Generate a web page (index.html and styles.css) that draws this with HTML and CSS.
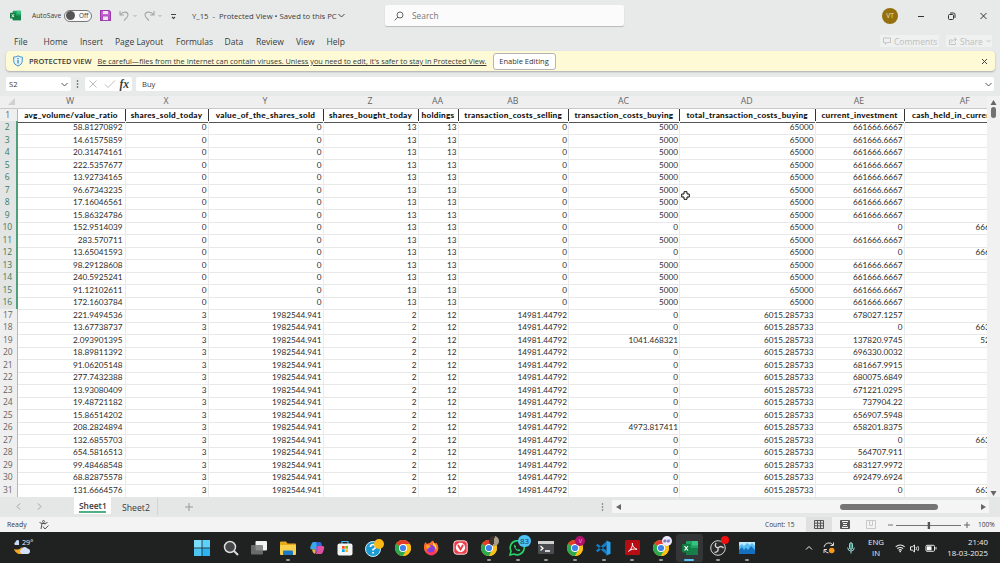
FILE: index.html
```html
<!DOCTYPE html>
<html lang="en">
<head>
    <meta charset="UTF-8">
    <meta name="viewport" content="width=device-width, initial-scale=1.0">
    <title>Y_15 - Protected View</title>
    <link rel="stylesheet" href="styles.css">
</head>
<body>

<svg class="defs" width="0" height="0">
    <symbol id="chrome" viewBox="0 0 16 16">
        <circle cx="8" cy="8" r="8" fill="#fbc116"/>
        <path d="M8 8 L1.1 4 A8 8 0 0 1 14.9 4 Z" fill="#e33b2e"/>
        <path d="M8 8 L1.1 4 A8 8 0 0 0 8 16 L11.4 10 Z" fill="#2da94f"/>
        <path d="M8 4 H14.9 A8 8 0 0 1 8 16 L11.4 10 Z" fill="#fbc116"/>
        <circle cx="8" cy="8" r="4" fill="#fff"/>
        <circle cx="8" cy="8" r="3.1" fill="#3f82ee"/>
    </symbol>
    <symbol id="excel" viewBox="0 0 16 16">
        <rect x="4" y="1" width="12" height="14" rx="1" fill="#1fa363"/>
        <path d="M10 1h5a1 1 0 0 1 1 1v3.500h-6z" fill="#35c481"/>
        <path d="M4 8h12v6a1 1 0 0 1-1 1H5a1 1 0 0 1-1-1z" fill="#17804a"/>
        <rect x="0" y="4" width="8.500" height="8.500" rx="1" fill="#107c41"/>
        <path d="M2.500 6l3.500 4.500M6 6l-3.500 4.500" stroke="#fff" stroke-width="1.200"/>
    </symbol>
</svg>

<div class="titlebar">
    <svg class="app-icon" width="11" height="11"><use href="#excel"/></svg>
    <span class="autosave">AutoSave</span>
    <span class="toggle"><i></i>Off</span>
    <svg class="save" width="11" height="11" viewBox="0 0 11 11">
        <path d="M.6.600h8.400l1.400 1.400v8.400H.6z" fill="#c868d4" stroke="#9c38ac" stroke-width="1.200"/>
        <rect x="3" y="1" width="5" height="3" fill="#f3e3f5"/>
        <rect x="2.500" y="6" width="6" height="4.400" fill="#f3e3f5" stroke="#9c38ac" stroke-width=".8"/>
    </svg>
    <svg class="undo" width="60" height="12" viewBox="0 0 60 12" fill="none" stroke="#a5a7a6" stroke-width="1.100">
        <path d="M1 1v4h4M1.300 4.800C4 1 9 1.500 9 5c0 2-2 3.500-4 5.500"/>
        <path d="M14.500 5l1.500 1.500L17.500 5" stroke-width=".9"/>
        <path d="M35 1v4h-4M34.700 4.800C32 1 26 1.500 26 5c0 2 2 3.500 4 5.500"/>
        <path d="M39.500 5l1.500 1.500L42.500 5" stroke-width=".9"/>
        <path d="M52 4.500h5M53 7l1.500 1.500L56 7" stroke="#444"/>
    </svg>
    <span class="doc-name">Y_15&nbsp; -&nbsp; Protected View • Saved to this PC</span>
    <svg class="doc-arrow" width="7" height="5" viewBox="0 0 7 5" fill="none" stroke="#444"><path d="M.5 1l3 3 3-3"/></svg>
    <div class="search">
        <svg width="10" height="10" viewBox="0 0 10 10" fill="none" stroke="#666"><circle cx="6" cy="4" r="3"/><path d="M4 6L.7 9.300"/></svg>
        Search
    </div>
    <span class="avatar">VT</span>
    <svg class="window-buttons" width="70" height="10" viewBox="0 0 70 10" fill="none" stroke="#333">
        <path d="M1 5.500h6"/>
        <rect x="31.500" y="3.500" width="5" height="5" rx="1"/>
        <path d="M33 2h3.500q1.500 0 1.500 1.500V7"/>
        <path d="M63.500 2l6 6M69.500 2l-6 6"/>
    </svg>
</div>

<div class="menu">
    <span>File</span><span>Home</span><span>Insert</span><span>Page Layout</span><span>Formulas</span><span>Data</span><span>Review</span><span>View</span><span>Help</span>
    <div class="menu-button comments">
        <svg width="8" height="8" viewBox="0 0 8 8" fill="none" stroke="#c3c3c3"><path d="M.5 1h7v4.500H4L2.500 7.300V5.500h-2z"/></svg>
        Comments
    </div>
    <div class="menu-button share">
        <svg width="8" height="8" viewBox="0 0 8 8" fill="none" stroke="#c3c3c3"><path d="M3 3H.5v4.500h6V5.500M2.500 5.500C3 3.500 4 2.500 7 2.500M5.500.5l2 2-2 2"/></svg>
        Share
        <svg width="5" height="4" viewBox="0 0 5 4" fill="none" stroke="#c3c3c3"><path d="M.5 1l2 2 2-2"/></svg>
    </div>
</div>

<div class="protected">
    <svg class="shield" width="10" height="12" viewBox="0 0 10 12">
        <path d="M5 .8C6.500 1.800 8 2 9.300 2v3.500C9.300 8.500 7.500 10 5 11 2.500 10 .7 8.500.7 5.500V2C2 2 3.500 1.800 5 .8z" fill="#e6f3fb" stroke="#3f94cc"/>
        <path d="M5 3v1.200M5 5v3.500" stroke="#2a84c4" stroke-width="1.200"/>
    </svg>
    <b>PROTECTED VIEW</b>
    <u>Be careful—files from the Internet can contain viruses. Unless you need to edit, it's safer to stay in Protected View.</u>
    <button>Enable Editing</button>
    <svg class="close" width="7" height="7" viewBox="0 0 7 7" stroke="#444"><path d="M1 1l5 5M6 1L1 6"/></svg>
</div>

<div class="formula-bar">
    <div class="name-box">S2
        <svg width="7" height="5" viewBox="0 0 7 5" fill="none" stroke="#555"><path d="M.5 1l3 3 3-3"/></svg>
    </div>
    <svg class="dots" width="3" height="8" viewBox="0 0 3 8" fill="#444"><circle cx="1.500" cy="1" r=".8"/><circle cx="1.500" cy="4" r=".8"/><circle cx="1.500" cy="7" r=".8"/></svg>
    <div class="fx">
        <svg width="27" height="8" viewBox="0 0 27 8" fill="none" stroke="#bbb"><path d="M.5.500l7 7M7.500.500l-7 7M16 4.500l3 3L26 .5"/></svg>
        <i>fx</i>
    </div>
    <div class="formula">Buy
        <svg width="7" height="5" viewBox="0 0 7 5" fill="none" stroke="#555"><path d="M.5 1l3 3 3-3"/></svg>
    </div>
</div>

<div class="sheet-area">
    <div class="sheet" id="sheet"></div>
    <div class="vscroll">
        <svg width="7" height="5" viewBox="0 0 7 5" fill="#666"><path d="M.5 5h6L3.500 0z"/></svg>
        <i></i>
        <svg class="down" width="7" height="5" viewBox="0 0 7 5" fill="#666"><path d="M.5 0h6L3.500 5z"/></svg>
    </div>
    <svg class="cursor" width="9" height="9" viewBox="0 0 9 9"><path d="M3 .7h3V3h2.300v3H6v2.300H3V6H.7V3H3z" fill="#fff" stroke="#111"/></svg>
</div>

<div class="tabs">
    <svg class="tab-nav" width="26" height="7" viewBox="0 0 26 7" fill="none" stroke="#a0a0a0"><path d="M4 .5l-3 3 3 3M22 .5l3 3-3 3"/></svg>
    <div class="tab active"><span>Sheet1</span></div>
    <div class="tab">Sheet2</div>
    <svg class="add" width="8" height="8" viewBox="0 0 8 8" stroke="#999"><path d="M4 0v8M0 4h8"/></svg>
    <svg class="tab-dots" width="3" height="8" viewBox="0 0 3 8" fill="#666"><circle cx="1.500" cy="1" r=".8"/><circle cx="1.500" cy="4" r=".8"/><circle cx="1.500" cy="7" r=".8"/></svg>
    <div class="hscroll">
        <svg width="5" height="6" viewBox="0 0 5 6" fill="#666"><path d="M5 0v6L0 3z"/></svg>
        <i></i>
        <svg width="5" height="6" viewBox="0 0 5 6" fill="#666"><path d="M0 0v6l5-3z"/></svg>
    </div>
</div>

<div class="status">
    <span class="ready">Ready</span>
    <svg class="access" width="10" height="10" viewBox="0 0 10 10" fill="none" stroke="#555"><circle cx="4.500" cy="1.500" r="1"/><path d="M.5 2.500l2.500 1L2 9M8.500 2.500L6 3.500v1M3 3.500h3M4 6.500l2 2.500 3.500-3.500"/></svg>
    <span class="count">Count: 15</span>
    <div class="view-btn on"><svg width="10" height="9" viewBox="0 0 10 9" fill="none" stroke="#555"><path d="M.5.500h9v8h-9zM3.500.500v8M6.500.500v8M.5 3.200h9M.5 5.800h9"/></svg></div>
    <div class="view-btn"><svg width="10" height="9" viewBox="0 0 10 9" fill="none" stroke="#555"><path d="M.5.500h9v8h-9zM2.500 2.500h5v4h-5zM2.500 4.500h5M8.500 1v7M1.500 1v7"/></svg></div>
    <div class="view-btn"><svg width="10" height="9" viewBox="0 0 10 9" fill="none" stroke="#c8c8c8"><path d="M.5.500h9v8h-9zM3.500.500v5h3v-5"/></svg></div>
    <svg class="zoom-slider" width="82" height="8" viewBox="0 0 82 8" stroke="#666"><path d="M0 4h5M8 4.500h65" stroke-width=".9"/><path d="M76 4h6M79 1v6"/><rect x="39.700" y="1" width="2.400" height="7" fill="#555" stroke="none"/></svg>
    <span class="percent">100%</span>
</div>

<div class="taskbar">
    <div class="weather">
        <svg width="18" height="16" viewBox="0 0 18 16">
            <path d="M2 6a2 2 0 0 1 .5-3A2.500 2.500 0 0 1 6 1.500V6z" fill="#c7d9f5"/>
            <path d="M1 10a6.500 6.500 0 0 0 10 4L9 8C6 11 4 11 1 10z" fill="#f5a623"/>
            <path d="M9 15a2.600 2.600 0 0 1-.3-5 3.300 3.300 0 0 1 5.800-.5A2.800 2.800 0 0 1 15 15z" fill="#d3e1fa"/>
        </svg>
        <span>29°</span>
    </div>
    <div class="apps">
        <div class="app"><svg width="16" height="16" viewBox="0 0 16 16" fill="#4cc5f5"><rect width="7.600" height="7.600" fill="#7bdcfb"/><rect x="8.400" width="7.600" height="7.600" fill="#5fd0fa"/><rect y="8.400" width="7.600" height="7.600"/><rect x="8.400" y="8.400" width="7.600" height="7.600" fill="#2db2f2"/></svg></div>
        <div class="app"><svg width="16" height="16" viewBox="0 0 16 16" fill="#454748" stroke="#dcdcdc" stroke-width="1.500"><circle cx="7" cy="7" r="5.500"/><path d="M11 11l4 4" stroke-width="2"/></svg></div>
        <div class="app"><svg width="16" height="16" viewBox="0 0 16 16"><rect x="4.500" y="1" width="11.500" height="9.500" rx="1" fill="#f3f3f3"/><rect y="5" width="12" height="9.500" rx="1" fill="#777" opacity=".85"/></svg></div>
        <div class="app run"><svg width="16" height="16" viewBox="0 0 16 16"><path d="M0 2.500a1 1 0 0 1 1-1h5l1.500 2H15a1 1 0 0 1 1 1V14H0z" fill="#e8a91d"/><rect y="5" width="16" height="10" rx="1" fill="#fbd04c"/><path d="M3 15v-3.500q0-1 1-1h8q1 0 1 1V15z" fill="#1d78c5"/></svg></div>
        <div class="app"><svg width="16" height="16" viewBox="0 0 16 16">
            <path d="M5 2h4L7 9.500H3C1 9.500 1 8 1.500 6.500L3 3Q3.500 2 5 2z" fill="#38a8e8"/><path d="M2 7l1 2.500h4l-1 4.500-2-1.500z" fill="#e9b83a"/><path d="M7 2h4q1 0 1.500 1.500L13 6H10L8.500 9z" fill="#3165dc"/><path d="M9 6h4.500c2 0 2 1.500 1.500 3l-1 3q-.5 2-2.500 2H7z" fill="#e0529f"/><path d="M7.500 6L9 7l-2 6-1.500 1z" fill="#9362e0"/></svg></div>
        <div class="app"><svg width="16" height="16" viewBox="0 0 16 16"><path d="M5 4V1.500h6V4" fill="none" stroke="#4bb8ee" stroke-width="1.200"/><rect x=".5" y="3.500" width="15" height="12" rx="2" fill="#f4f4f4"/><rect x="5" y="6" width="2.700" height="2.700" fill="#f25022"/><rect x="8.300" y="6" width="2.700" height="2.700" fill="#7fba00"/><rect x="5" y="9.300" width="2.700" height="2.700" fill="#00a4ef"/><rect x="8.300" y="9.300" width="2.700" height="2.700" fill="#ffb900"/></svg></div>
        <div class="app"><svg width="20" height="18" viewBox="0 0 20 18"><circle cx="9" cy="10" r="7.500" fill="#1b9bd3" stroke="#c8ecfa"/><path d="M6.500 8q0-2.500 2.500-2.500T11.500 8Q11.500 9.500 9 10.500v1M9 13v1.600" fill="none" stroke="#fff" stroke-width="1.700"/><circle cx="15" cy="5" r="5" fill="#fcb813"/></svg></div>
        <div class="app"><svg width="16" height="16"><use href="#chrome"/></svg></div>
        <div class="app"><svg width="16" height="16" viewBox="0 0 16 16"><path d="M1 6q0-2 1.500-4L4 4q1.500-1 3-1Q8 1 10 .5q0 2 2 3l1.500-.8Q15.500 5 15.500 8.500A7.400 7.400 0 0 1 1 9z" fill="#ff6a28"/><path d="M10 .5q0 2 2 3.500 2 2 1.500 5.500L10 6z" fill="#ffd23c"/><circle cx="8" cy="9" r="4" fill="#843fda"/><path d="M2 8q2 5 6 4.500T11.500 9Q15 14 9 15.500 3 15.500 2 8z" fill="#ff385d"/><path d="M3 5q3-1 5 2Q5 7 5 9.500 3 8 3 5z" fill="#ffa526"/></svg></div>
        <div class="app"><svg width="15" height="15" viewBox="0 0 15 15"><rect x=".8" y=".8" width="13.400" height="13.400" rx="3" fill="#ef3b47" stroke="#f7dadc"/><circle cx="7.500" cy="7.500" r="4.700" fill="#fff"/><path d="M5.300 5.500l2.200 4 2.200-4" fill="none" stroke="#ef3b47" stroke-width="1.800" stroke-linecap="round"/></svg></div>
        <div class="app run"><svg width="16" height="16"><use href="#chrome"/></svg><em class="photo"></em></div>
        <div class="app run"><svg width="16" height="16" viewBox="0 0 16 16"><path d="M1 15l1-4A7 7 0 1 1 5 14z" fill="#202222" stroke="#27d366" stroke-width="1.600"/><path d="M5.500 4.500q-1 1-.3 2.500Q6.500 10 9 11q1.500.5 2.500-.8L9.800 9l-1 .8Q7 9 6.500 7.500l.7-1z" fill="#27d366"/></svg><em class="count-badge">83</em></div>
        <div class="app run"><svg width="16" height="13" viewBox="0 0 16 13"><rect width="16" height="13" rx="1" fill="#4a4d50"/><rect width="16" height="3" fill="#d0d0d0"/><path d="M2.500 5l2.500 2.200L2.500 9.500M7 10h5" fill="none" stroke="#fff" stroke-width="1.300"/></svg></div>
        <div class="app run"><svg width="16" height="16"><use href="#chrome"/></svg><em class="letter">V</em></div>
        <div class="app run"><svg width="16" height="16" viewBox="0 0 16 16"><path d="M11.500.5L15.500 2.300v11.400l-4 1.800z" fill="#2aa2ee"/><path d="M12 1L1 10.500l1.500 1.700L12 5zM12 15L1 5.500l1.500-1.700L12 11z" fill="#127cc4"/></svg></div>
        <div class="app run"><svg width="15" height="15" viewBox="0 0 15 15"><rect width="15" height="15" rx="1.500" fill="#b50d12"/><path d="M7.500 3c-.8 1 .6 5 4.500 6.300-3-.8-6 0-8.500 2C5.500 10 8 6.500 7.500 3z" fill="none" stroke="#fff"/></svg></div>
        <div class="app run"><svg width="16" height="16"><use href="#chrome"/></svg><em class="hash">##</em></div>
        <div class="app run current"><svg width="16" height="16"><use href="#excel"/></svg></div>
        <div class="app run"><svg width="16" height="16" viewBox="0 0 16 16"><circle cx="8" cy="8" r="7.300" fill="#2b2b2d" stroke="#d5d5d5"/><path d="M8 8q-4-1-2-5M8 8q3-3 5.500 0M8 8q1 4-3.500 4.500" fill="none" stroke="#d5d5d5" stroke-width="1.400"/></svg><em class="rec"></em></div>
        <div class="app run"><svg width="16" height="12" viewBox="0 0 16 12"><rect width="16" height="12" fill="#55bdf2"/><path d="M0 8l3-3 2 3 2-2.500 2 2.500 3-4 4 4v4H0z" fill="#1470bd"/><path d="M0 4l3-2 2 2 3-3 3 2 2-2 3 3V0H0z" fill="#bfe8fb"/></svg></div>
    </div>
    <div class="tray">
        <svg class="chevron" width="8" height="5" viewBox="0 0 8 5" fill="none" stroke="#eee"><path d="M1 4.500l3-3 3 3"/></svg>
        <svg class="sync" width="12" height="12" viewBox="0 0 12 12" fill="none" stroke="#ddd"><path d="M1 5a5 5 0 0 1 9-2M10.500.5V3.500H7.500M1 11V7.500h3M1.500 8a5 5 0 0 0 4 3"/><circle cx="8.700" cy="8.500" r="2.800" fill="#f79a1c" stroke="none"/></svg>
        <svg class="mic" width="8" height="12" viewBox="0 0 8 12" fill="none" stroke="#9adbd3"><rect x="2.500" y=".8" width="3" height="6.500" rx="1.500" fill="#3f8f88"/><path d="M.7 5.500q0 3.500 3.300 3.500t3.300-3.500M4 9v2.500"/></svg>
        <div class="lang">ENG<br>IN</div>
        <svg class="net" width="42" height="10" viewBox="0 0 42 10" fill="none" stroke="#e8e8e8">
            <path d="M.7 4a6 6 0 0 1 9 0M2.300 5.700a4 4 0 0 1 5.800 0M3.700 7.300a2 2 0 0 1 3 0" stroke-width="1.100"/><circle cx="5.200" cy="8.600" r=".8" fill="#fff" stroke="none"/>
            <path d="M15.500 3.800h1.800L19.500 2v7l-2.200-1.900h-1.800zM21 4q1 1.500 0 3M22.800 3q1.700 2.500 0 5"/>
            <rect x="31" y="2.300" width="8.500" height="6" rx="1"/><rect x="32" y="3.300" width="4.500" height="4" fill="#fff" stroke="none"/><path d="M41 4v2.500"/>
        </svg>
        <div class="clock">21:40<br>18-03-2025</div>
    </div>
</div>

<script src="script.js"></script>
</body>
</html>
```

FILE: styles.css
```css
* {
    box-sizing: border-box;
}
body {
    margin: 0;
    width: 1000px;
    height: 563px;
    overflow: hidden;
    background: #e8eae9;
    color: #3a3a3a;
    font-family: "Open Sans", "Noto Sans", sans-serif;
    font-size: 8px;
    display: flex;
    flex-direction: column;
}
svg {
    display: block;
    flex: none;
}
.defs {
    position: absolute;
}
span, b, u {
    white-space: nowrap;
}

/* title bar */
.titlebar {
    height: 31px;
    display: flex;
    align-items: center;
    padding-left: 10px;
}
.autosave {
    margin-left: 11px;
    width: 32px;
    font-size: 6.7px;
}
.toggle {
    width: 28px;
    height: 12px;
    border: 1px solid #777;
    border-radius: 6px;
    background: #fafafa;
    display: flex;
    align-items: center;
    font-size: 6.5px;
    padding-left: 1px;
    gap: 4px;
}
.toggle i {
    width: 9px;
    height: 9px;
    border-radius: 50%;
    background: #555;
}
.save {
    margin-left: 8px;
}
.undo {
    margin-left: 8px;
}
.doc-name {
    margin-left: 13px;
    width: 144px;
    font-size: 7.7px;
}
.doc-arrow {
    margin-left: 2px;
}
.search {
    margin-left: 40px;
    width: 239px;
    height: 21px;
    border-radius: 2px;
    background: #fbfbfb;
    box-shadow: 0 1px 1px #b8b8b8;
    display: flex;
    align-items: center;
    gap: 8px;
    padding-left: 9px;
    font-size: 8.4px;
    color: #777;
}
.avatar {
    margin-left: 258px;
    width: 16px;
    height: 16px;
    border-radius: 50%;
    background: #94700f;
    color: #eee0b0;
    font-size: 6.5px;
    line-height: 16px;
    text-align: center;
}
.window-buttons {
    margin-left: 19px;
}

/* ribbon tabs */
.menu {
    height: 20px;
    display: grid;
    grid-template-columns: 29.500px 36.500px 35px 61px 48.500px 31.500px 40px 30.500px 553.500px 66px 46px;
    align-items: center;
    padding-left: 14px;
    font-size: 8.5px;
}
.menu-button {
    height: 12px;
    display: flex;
    align-items: center;
    background: #eff0f0;
    color: #c0c0c0;
    gap: 3px;
    padding-left: 3px;
}
.comments {
    width: 59px;
    grid-column: 10;
}

/* protected view message */
.protected {
    height: 20px;
    margin: 0 5px 6px 6px;
    background: #fdfad5;
    border-radius: 4px;
    box-shadow: 0 1px 2px #aaa;
    display: flex;
    align-items: center;
    padding-left: 7px;
    font-size: 7.350px;
}
.protected b {
    margin-left: 6px;
    width: 68.500px;
    font-size: 7.5px;
    font-weight: 600;
}
.protected u {
    width: 389px;
}
.protected button {
    margin-left: 6px;
    width: 63px;
    height: 17px;
    border: 1px solid #b5b5b5;
    border-radius: 3px;
    background: #fff;
    color: #333;
    font: 7.5px "Open Sans", sans-serif;
    padding: 0;
    white-space: nowrap;
}
.close {
    margin-left: auto;
    margin-right: 7px;
}

/* formula bar */
.formula-bar {
    height: 14px;
    margin: 0 6px 5px;
    display: flex;
    align-items: center;
}
.name-box, .fx, .formula {
    height: 14px;
    background: #fff;
    border-radius: 2px;
    display: flex;
    align-items: center;
    justify-content: space-between;
    font-size: 7.6px;
}
.name-box {
    width: 65px;
    padding: 0 3px;
}
.dots {
    margin: 0 5px;
}
.fx {
    width: 47px;
    padding: 0 3px 0 4px;
    margin-left: 1px;
}
.fx i {
    font: italic bold 11.5px "Liberation Serif", serif;
    line-height: 13px;
}
.formula {
    flex: 1;
    margin-left: 4px;
    padding: 0 2px 0 6px;
}

/* grid */
.sheet-area {
    position: relative;
    height: 400.500px;
    display: flex;
}
.sheet {
    width: 987px;
    overflow: hidden;
    background: #fff;
}
.row {
    width: 1027px;
    height: 12.500px;
    display: grid;
    grid-template-columns: 17.500px 108px 83px 115px 95px 40px 110.500px 111px 135.500px 89px 122.500px;
    font-family: Lato, sans-serif;
    font-size: 8.200px;
    line-height: 13px;
    color: #2c2c2c;
}
.row div {
    border-right: 1px solid #ebebeb;
    border-bottom: 1px solid #e8e8e8;
    padding-right: 1px;
    text-align: right;
    white-space: nowrap;
}
.row div:nth-child(2) {
    padding-right: 2px;
}
.row .num {
    background: #efefef;
    color: #666;
    text-align: center;
    border-right-color: #b5b5b5;
    border-bottom-color: #e0e0e0;
    font-family: "Open Sans", sans-serif;
    font-size: 8.5px;
    line-height: 12px;
}
.row.selected .num {
    background: #e2e5e3;
    color: #3f7a5d;
    border-right: 2px solid #4f9f78;
}
.row.letters div {
    background: #efefef;
    border-right-color: #efefef;
    border-bottom-color: #c8c8c8;
    text-align: center;
    color: #666;
    font-family: "Open Sans", sans-serif;
    font-size: 8.8px;
    line-height: 11px;
}
.row.letters .num {
    display: flex;
    justify-content: flex-end;
    align-items: center;
}
.row.names div:not(.num) {
    text-align: center;
    font-weight: 900;
    letter-spacing: .26px;
    color: #111;
    border-right-color: #333;
    border-bottom-color: #555;
    padding: 0;
}
.vscroll {
    width: 13px;
    background: #f1f1f1;
    display: flex;
    flex-direction: column;
    align-items: center;
    padding: 4px 0 1px;
}
.vscroll i {
    width: 5px;
    height: 11px;
    margin-top: 2px;
    border-radius: 3px;
    background: #727272;
}
.vscroll .down {
    margin-top: auto;
}
.cursor {
    position: absolute;
    left: 681px;
    top: 95px;
}

/* sheet tabs */
.tabs {
    height: 20.500px;
    background: #e5e6e6;
    display: flex;
    align-items: center;
    padding-left: 16px;
    font-size: 8.7px;
}
.tab-nav {
    margin-right: 32px;
}
.tab {
    height: 17px;
    padding: 2px 7px 0 6px;
    line-height: 17px;
    margin-left: 5px;
    border-right: 1px solid #d4d4d4;
}
.tab.active {
    width: 37px;
    align-self: flex-start;
    margin-left: 0;
    padding: 0 5px;
    background: #fff;
    border: none;
    font-weight: 600;
    font-size: 8.4px;
    line-height: 17px;
}
.tab.active span {
    display: block;
    height: 16px;
    border-bottom: 2px solid #4fae84;
}
.add {
    margin-left: 27px;
}
.tab-dots {
    margin-left: 408px;
}
.hscroll {
    margin-left: 8px;
    width: 377px;
    height: 13px;
    background: #f5f5f5;
    display: flex;
    align-items: center;
    padding-left: 4px;
}
.hscroll i {
    width: 98px;
    height: 6px;
    border-radius: 3px;
    background: #757575;
    margin: 0 43px 0 219px;
}

/* status bar */
.status {
    height: 15px;
    background: #f3f3f3;
    display: flex;
    align-items: center;
    padding-left: 7px;
    font-size: 6.9px;
}
.ready {
    width: 32px;
}
.count {
    margin-left: 716px;
    width: 41px;
    font-size: 6.6px;
}
.view-btn {
    width: 26px;
    height: 15px;
    display: flex;
    align-items: center;
    justify-content: center;
}
.view-btn.on {
    background: #e0e0e0;
}
.zoom-slider {
    margin-left: 4px;
}
.percent {
    margin-left: 8px;
    font-size: 6.6px;
}

/* taskbar */
.taskbar {
    height: 31px;
    background: #202222;
    color: #eee;
    display: flex;
}
.weather {
    width: 187.500px;
    padding: 7px 0 0 13px;
    display: flex;
    font-size: 7.2px;
    line-height: 6px;
}
.weather span {
    margin-left: -9px;
}
.apps {
    display: grid;
    grid-template-columns: repeat(20, 28.700px);
}
.app {
    position: relative;
    height: 31px;
    display: flex;
    align-items: center;
    justify-content: center;
}
.app.run::after {
    content: "";
    position: absolute;
    left: 12.500px;
    bottom: 2.500px;
    width: 4px;
    height: 2px;
    border-radius: 1px;
    background: #999;
}
.app.current::before {
    content: "";
    position: absolute;
    inset: 2px 1px 1px;
    border-radius: 3px;
    background: #333536;
}
.app.current svg {
    position: relative;
}
.app.current::after {
    left: 9px;
    width: 10px;
    background: #55c3f5;
}
.app em {
    position: absolute;
    left: 15px;
    top: 4px;
    width: 10px;
    height: 10px;
    border-radius: 50%;
    font-size: 5.5px;
    font-style: normal;
    line-height: 10px;
    text-align: center;
}
.photo {
    background: linear-gradient(100deg, #3a332c 50%, #a79d88 50%);
}
.app .count-badge {
    width: 13px;
    height: 12px;
    border-radius: 6px;
    top: 3px;
    background: #4cc2f5;
    color: #10374a;
    font-size: 8px;
    line-height: 12px;
}
.letter {
    background: #b3106e;
    color: #f0c0dc;
}
.hash {
    background: #eeeafc;
    color: #5547b5;
}
.app .rec {
    width: 8px;
    height: 8px;
    left: 17px;
    background: #f01010;
}
.tray {
    margin-left: auto;
    display: flex;
    align-items: center;
    padding-right: 12px;
    font-size: 7.8px;
    line-height: 10.500px;
}
.sync {
    margin-left: 10px;
}
.mic {
    margin-left: 12px;
}
.lang {
    margin-left: 9px;
    width: 24px;
    text-align: center;
    font-size: 7.8px;
}
.net {
    margin-left: 7px;
}
.clock {
    width: 51px;
    text-align: right;
    white-space: nowrap;
}
```

FILE: script.js
```js
const letters = ['W', 'X', 'Y', 'Z', 'AA', 'AB', 'AC', 'AD', 'AE', 'AF'];
const names = ['avg_volume/value_ratio', 'shares_sold_today', 'value_of_the_shares_sold', 'shares_bought_today', 'holdings',
    'transaction_costs_selling', 'transaction_costs_buying', 'total_transaction_costs_buying', 'current_investment', 'cash_held_in_current_cycle'];

// ratio, buying cost, investment, cash
const data = [
    ['58.81270892', 5000, '661666.6667', ''],
    ['14.61575859', 5000, '661666.6667', ''],
    ['20.31474161', 5000, '661666.6667', ''],
    ['222.5357677', 5000, '661666.6667', ''],
    ['13.92734165', 5000, '661666.6667', ''],
    ['96.67343235', 5000, '661666.6667', ''],
    ['17.16046561', 5000, '661666.6667', ''],
    ['15.86324786', 5000, '661666.6667', ''],
    ['152.9514039', 0, '0', '666666.6667'],
    ['283.570711', 5000, '661666.6667', ''],
    ['13.65041593', 0, '0', '666666.6667'],
    ['98.29128608', 5000, '661666.6667', ''],
    ['240.5925241', 5000, '661666.6667', ''],
    ['91.12102611', 5000, '661666.6667', ''],
    ['172.1603784', 5000, '661666.6667', ''],
    ['221.9494536', 0, '678027.1257', ''],
    ['13.67738737', 0, '0', '663333.3333'],
    ['2.093901395', '1041.468321', '137820.9745', '52333.3333'],
    ['18.89811392', 0, '696330.0032', ''],
    ['91.06205148', 0, '681667.9915', ''],
    ['277.7432388', 0, '680075.6849', ''],
    ['13.93080409', 0, '671221.0295', ''],
    ['19.48721182', 0, '737904.22', ''],
    ['15.86514202', 0, '656907.5948', ''],
    ['208.2824894', '4973.817411', '658201.8375', ''],
    ['132.6855703', 0, '0', '663333.3333'],
    ['654.5816513', 0, '564707.911', ''],
    ['99.48468548', 0, '683127.9972', ''],
    ['68.82875578', 0, '692479.6924', ''],
    ['131.6664576', 0, '0', '663333.3333']
];

function addRow(cls, first, cells) {
    const row = document.createElement('div');
    row.className = 'row ' + cls;
    row.innerHTML = `<div class="num">${first}</div>` + cells.map(c => `<div>${c}</div>`).join('');
    document.getElementById('sheet').appendChild(row);
}

addRow('letters', '<svg width="8" height="8" viewBox="0 0 8 8"><path d="M7 0v7H0z" fill="#d0d0d0"/></svg>', letters);
addRow('names', 1, names);

data.forEach((d, i) => {
    const first = i < 15;
    const fixed = first ? [0, 0, 13, 13, 0] : [3, '1982544.941', 2, 12, '14981.44792'];
    addRow(first ? 'selected' : '', i + 2, [d[0], ...fixed, d[1], first ? 65000 : '6015.285733', d[2], d[3]]);
});
```
